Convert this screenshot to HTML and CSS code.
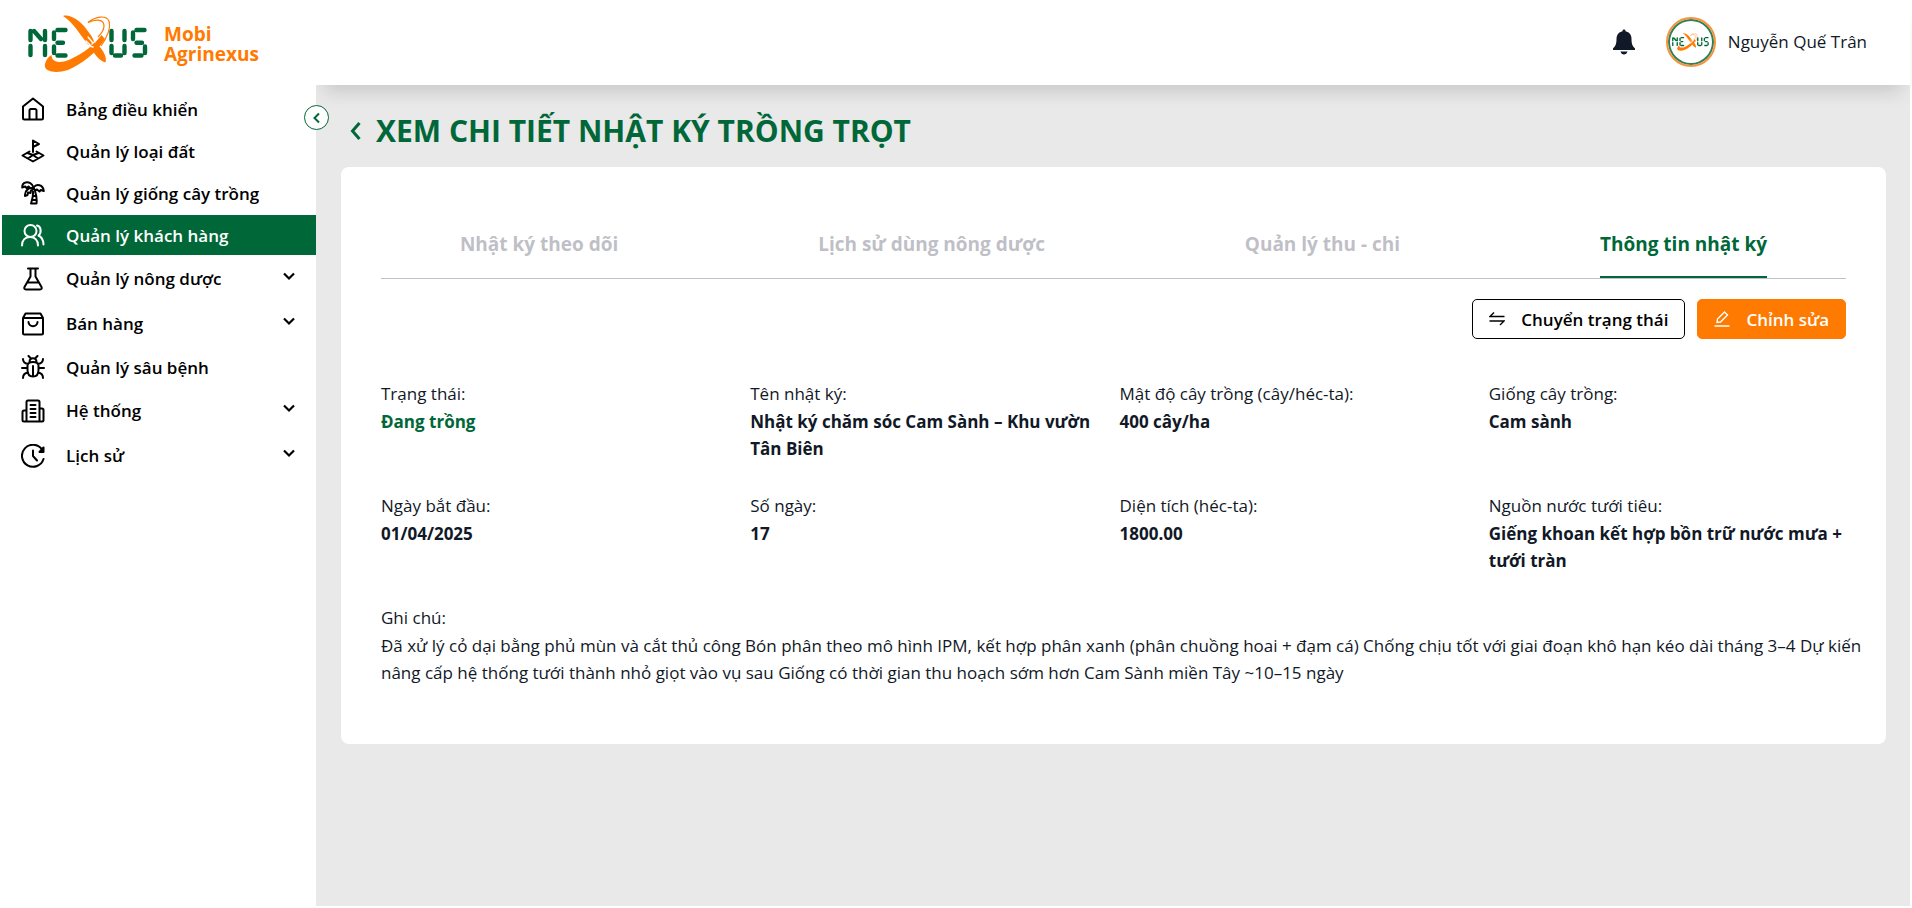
FILE: index.html
```html
<!DOCTYPE html>
<html lang="vi">
<head>
  <meta charset="UTF-8" />
  <meta name="viewport" content="width=device-width, initial-scale=1.0"/>
  <title>Mobi Agrinexus - Chi tiết nhật ký trồng trọt</title>
  <link rel="stylesheet" href="styles.css">
</head>
<body>

  <!-- shared drawings -->
  <svg class="defs" width="0" height="0" aria-hidden="true">
    <symbol id="nexus" viewBox="0 0 120 58">
      <g fill="none" stroke="#006838" stroke-width="4.400" stroke-linecap="round">
        <path d="M2.500 16v9M2.500 31v9M17 16v9M17 31v9M6 16l7 8"/>
        <path d="M26 17.500v6.500M26 31.500v6.500M29.500 15h8M29.500 27.700h5.500M29.500 40.500h8"/>
        <path d="M83.500 16v9M83.500 31v7M96.500 16v9M96.500 31v7M87 40.500h6"/>
        <path d="M105 17.500v6.500M117 31.500v6.500M108.500 15h8M108.500 27.700h5.500M106.500 40.500h7"/>
      </g>
      <path fill="#ff7a00" d="M35 1C42-1 50 5 56 11L71 31C76 37 79 42 77.500 47.500C72 46 68 41 64 35L52 19C46 10 41 5 35 1Z"/>
      <path fill="#ff7a00" d="M23.500 40C24 49 34 48 43 44C56 38 67 29 73.500 20L77 24C68 38 54 49 40 55C28 59 15 57 17 49C18 45 20 42 23.500 40Z"/>
      <path fill="none" stroke="#ff7a00" stroke-width="1.200" d="M60 7.500C68 1 78 0 81 6C83 13 79 23 73 31"/>
      <path fill="none" stroke="#ff7a00" stroke-width="1.200" d="M60 7.500C70 3 76 5 76 11C76 16 72 20 70 22"/>
      <path fill="none" stroke="#fff" stroke-width="1.400" stroke-linecap="round" d="M58 26l5 5M60 22l5 6M64 20l3 7M58 30l7 2M64 29l5-5"/>
    </symbol>
    <symbol id="down" viewBox="0 0 14 14">
      <path d="M2 4.500l5 5 5-5" fill="none" stroke="currentColor" stroke-width="2.200"/>
    </symbol>
  </svg>

  <div class="layout">
    <aside class="sidebar">
      <a href="#" class="brand">
        <svg class="brand-logo"><use href="#nexus"/></svg>
        <span class="brand-name">Mobi<br>Agrinexus</span>
      </a>

      <nav class="menu">
        <a href="#" class="menu-item">
          <svg class="icon" viewBox="0 0 24 24"><path d="M2 9.500L12 1.500l10 8V21a1.500 1.500 0 0 1-1.500 1.500h-17A1.500 1.500 0 0 1 2 21zM8.500 22.500V13.500a1.500 1.500 0 0 1 1.500-1.500h4a1.500 1.500 0 0 1 1.500 1.500v9"/></svg>
          <span>Bảng điều khiển</span>
        </a>
        <a href="#" class="menu-item">
          <svg class="icon" viewBox="0 0 24 24"><path d="M12 13V1.500l6 3.500-6 3M8.500 12.500L1.500 16.500 12 22.500 22.500 16.500 15.500 12.500M6.500 14l5.500 2 5.500-2M7 19.500l5-3.500 5 3.500"/></svg>
          <span>Quản lý loại đất</span>
        </a>
        <a href="#" class="menu-item">
          <svg class="icon" viewBox="0 0 24 24"><path d="M12.500 6.500C11 2 7 .5 4.500 1.500 2.500 2 1.200 4 1.200 6.500l3-1 1.300 1.500 2-1.500 1.500 1.500M12.500 6.500c3-4 9.500-3 10.300 3.500l-3-1-1.300 1.500-2.500-2-2 1zM12.500 7.500C8 6 3.500 9.500 4 15l2.500-1 .5-2.500 2.500.5.500-2.500zM12 10.500C12.500 15 11 19 10 22.500h5.500c.5-4 0-8-1.500-12.500M13 15h2M12.500 19h2.500"/></svg>
          <span>Quản lý giống cây trồng</span>
        </a>
        <a href="#" class="menu-item active">
          <svg class="icon" viewBox="0 0 24 24"><path d="M1 22.500c0-5.500 3.500-8.500 8-8.500s8 3 8 8.500"/><circle cx="9.500" cy="8" r="6"/><path d="M16 2.500c4 .5 5 7 1.500 10 3 1.500 5 4.500 5 9"/></svg>
          <span>Quản lý khách hàng</span>
        </a>
        <button type="button" class="menu-item has-sub">
          <svg class="icon" viewBox="0 0 24 24"><path d="M7 1.500h10M9.500 1.500v8L3.500 20c-.7 1.500 0 2.500 1.500 2.500h14c1.500 0 2.200-1 1.500-2.500L14.500 9.500v-8M6.500 15.500h11"/></svg>
          <span>Quản lý nông dược</span>
          <svg class="arrow"><use href="#down"/></svg>
        </button>
        <button type="button" class="menu-item has-sub">
          <svg class="icon" viewBox="0 0 24 24"><path d="M2 6l2.500-4.500h15L22 6v15a1.500 1.500 0 0 1-1.500 1.500h-17A1.500 1.500 0 0 1 2 21zM2 6h20M7.500 10c0 5.500 9 5.500 9 0"/></svg>
          <span>Bán hàng</span>
          <svg class="arrow"><use href="#down"/></svg>
        </button>
        <a href="#" class="menu-item">
          <svg class="icon" viewBox="0 0 24 24"><path d="M6.500 10.500C6.500 8 8 7 12 7s5.500 1 5.500 3.500V15c0 4-2 6.500-5.500 6.500S6.500 19 6.500 15zM12 11v10M8.500 7c0-5 7-5 7 0M7.500 1l2 2M16.500 1l-2 2M1 13h5M18 13h5M2 4c0 3 1.500 4.500 5 5M22 4c0 3-1.500 4.500-5 5M2 23c0-3.500 1.500-5 5-5.500M22 23c0-3.500-1.500-5-5-5.500"/></svg>
          <span>Quản lý sâu bệnh</span>
        </a>
        <button type="button" class="menu-item has-sub">
          <svg class="icon" viewBox="0 0 24 24"><path d="M5.500 22.500V3A1.500 1.500 0 0 1 7 1.500h10A1.500 1.500 0 0 1 18.500 3v19.500M5.500 11.500H3A1.500 1.500 0 0 0 1.500 13v8A1.500 1.500 0 0 0 3 22.500h18a1.500 1.500 0 0 0 1.500-1.500v-10A1.500 1.500 0 0 0 21 9.500h-2.500M9.500 6h5M9.500 10h5M9.500 14h5M9.500 18h5"/></svg>
          <span>Hệ thống</span>
          <svg class="arrow"><use href="#down"/></svg>
        </button>
        <button type="button" class="menu-item has-sub">
          <svg class="icon" viewBox="0 0 24 24"><path d="M21 5.500A11 11 0 1 0 22.500 15M12 6.500V12l4 4.500"/><path fill="currentColor" d="M22.500 3.500V8H18.500z"/></svg>
          <span>Lịch sử</span>
          <svg class="arrow"><use href="#down"/></svg>
        </button>
      </nav>

      <button type="button" class="collapse" aria-label="Thu gọn">
        <svg width="12" height="12" viewBox="0 0 12 12"><path d="M8 1.500L3.500 6 8 10.500"/></svg>
      </button>
    </aside>

    <div class="main">
      <header class="topbar">
        <button type="button" class="bell" aria-label="Thông báo">
          <svg width="24" height="26" viewBox="0 0 24 26"><path fill="currentColor" d="M12 .5c1 0 1.500.7 1.500 1.700C17.500 3 19.500 6 19.500 10c0 5 1 7 3.500 9.500v1.500H1v-1.500C3.500 17 4.500 15 4.500 10c0-4 2-7 6-7.800 0-1 .5-1.700 1.500-1.700zM8.500 22.500h7c-.5 1.800-1.800 3-3.500 3s-3-1.200-3.500-3z"/></svg>
        </button>
        <a href="#" class="user">
          <span class="avatar"><svg width="37" height="18"><use href="#nexus"/></svg></span>
          <span>Nguyễn Quế Trân</span>
        </a>
      </header>

      <main class="content">
        <div class="page-title">
          <a href="#" class="back" aria-label="Quay lại">
            <svg width="12" height="20" viewBox="0 0 12 20"><path d="M9.500 2L2.500 10l7 8"/></svg>
          </a>
          <h1>XEM CHI TIẾT NHẬT KÝ TRỒNG TRỌT</h1>
        </div>

        <section class="card">
          <div class="tabs" role="tablist">
            <button type="button" class="tab" role="tab">Nhật ký theo dõi</button>
            <button type="button" class="tab" role="tab">Lịch sử dùng nông dược</button>
            <button type="button" class="tab" role="tab">Quản lý thu - chi</button>
            <button type="button" class="tab selected" role="tab" aria-selected="true">Thông tin nhật ký</button>
          </div>

          <div class="actions">
            <button type="button" class="btn btn-outline">
              <svg width="16" height="16" viewBox="0 0 16 16"><path d="M15.500 5.500H1l4-4M.500 10H15l-4 4"/></svg>
              Chuyển trạng thái
            </button>
            <button type="button" class="btn btn-primary">
              <svg width="16" height="16" viewBox="0 0 16 16"><path d="M.500 15h15M3 11.500l.500-3.500L10.500 1 13.500 4 6.500 11z"/></svg>
              Chỉnh sửa
            </button>
          </div>

          <dl class="info">
            <div>
              <dt>Trạng thái:</dt>
              <dd class="status">Đang trồng</dd>
            </div>
            <div>
              <dt>Tên nhật ký:</dt>
              <dd>Nhật ký chăm sóc Cam Sành – Khu vườn Tân Biên</dd>
            </div>
            <div>
              <dt>Mật độ cây trồng (cây/héc-ta):</dt>
              <dd>400 cây/ha</dd>
            </div>
            <div>
              <dt>Giống cây trồng:</dt>
              <dd>Cam sành</dd>
            </div>
            <div>
              <dt>Ngày bắt đầu:</dt>
              <dd>01/04/2025</dd>
            </div>
            <div>
              <dt>Số ngày:</dt>
              <dd>17</dd>
            </div>
            <div>
              <dt>Diện tích (héc-ta):</dt>
              <dd>1800.00</dd>
            </div>
            <div>
              <dt>Nguồn nước tưới tiêu:</dt>
              <dd>Giếng khoan kết hợp bồn trữ nước mưa + tưới tràn</dd>
            </div>
            <div class="note">
              <dt>Ghi chú:</dt>
              <dd>Đã xử lý cỏ dại bằng phủ mùn và cắt thủ công Bón phân theo mô hình IPM, kết hợp phân xanh (phân chuồng hoai + đạm cá) Chống chịu tốt với giai đoạn khô hạn kéo dài tháng 3–4 Dự kiến nâng cấp hệ thống tưới thành nhỏ giọt vào vụ sau Giống có thời gian thu hoạch sớm hơn Cam Sành miền Tây ~10–15 ngày</dd>
            </div>
          </dl>
        </section>
      </main>
    </div>
  </div>

</body>
</html>
```
FILE: styles.css
```css
* {
  box-sizing: border-box;
}

body {
  margin: 0;
  padding: 2px;
  background: #fff;
  color: #111827;
  font-family: 'Segoe UI', 'Open Sans', 'Noto Sans', sans-serif;
  font-size: 17px;
  line-height: 27px;
}

a {
  color: inherit;
  text-decoration: none;
}

button {
  font: inherit;
  color: inherit;
  background: none;
  border: none;
  padding: 0;
  cursor: pointer;
}

svg {
  flex-shrink: 0;
}

.defs {
  position: absolute;
}

.layout {
  display: flex;
  min-height: calc(100vh - 4px);
}

/* sidebar */
.sidebar {
  position: relative;
  flex: 0 0 314px;
  z-index: 2;
  background: #fff;
}

.brand {
  display: flex;
  align-items: center;
  gap: 16px;
  height: 83px;
  padding-left: 26px;
}

.brand-logo {
  width: 120px;
  height: 58px;
}

.brand-name {
  color: #ff7a00;
  font-size: 19px;
  font-weight: 700;
  line-height: 20px;
}

.menu {
  display: flex;
  flex-direction: column;
  gap: 2px;
  padding-top: 4px;
}

.menu-item {
  display: flex;
  align-items: center;
  gap: 21px;
  height: 40px;
  padding: 0 20px 0 19px;
  color: #000;
  font-weight: 600;
  text-align: left;
}

.menu-item.has-sub {
  height: 43px;
}

.menu-item.active {
  background: #006838;
  color: #fff;
}

.icon {
  width: 24px;
  height: 24px;
  fill: none;
  stroke: currentColor;
  stroke-width: 2;
  stroke-linejoin: round;
  stroke-linecap: round;
}

.arrow {
  width: 14px;
  height: 14px;
  margin: 0 0 5px auto;
}

.collapse {
  position: absolute;
  top: 103px;
  right: -13px;
  display: flex;
  align-items: center;
  justify-content: center;
  width: 25px;
  height: 25px;
  border: 1px solid #006838;
  border-radius: 50%;
  background: #fff;
}

.collapse path,
.back path {
  fill: none;
  stroke: #006838;
  stroke-width: 2;
}

/* main column */
.main {
  flex: 1;
  min-width: 0;
  background: #e9e9e9;
}

.topbar {
  display: flex;
  align-items: center;
  justify-content: flex-end;
  gap: 30px;
  height: 83px;
  padding: 0 43px 4px 0;
  background: #fff;
  box-shadow: 0 14px 18px -8px rgba(0, 0, 0, 0.15);
}

.bell {
  display: flex;
}

.user {
  display: flex;
  align-items: center;
  gap: 12px;
}

.avatar {
  display: flex;
  align-items: center;
  justify-content: center;
  width: 50px;
  height: 50px;
  border: 2px solid #f7933c;
  border-radius: 50%;
  box-shadow: inset 0 0 0 2px #2f8058;
}

.content {
  padding: 24px 24px 24px 25px;
}

.page-title {
  display: flex;
  align-items: center;
  gap: 14px;
  height: 44px;
  padding-left: 9px;
}

.back {
  display: flex;
}

.back path {
  stroke-width: 3;
}

.page-title h1 {
  margin: 0;
  color: #006838;
  font-size: 30px;
  font-weight: 700;
  line-height: 44px;
}

.card {
  margin-top: 14px;
  padding: 40px 40px 58px;
  border-radius: 8px;
  background: #fff;
}

.tabs {
  display: flex;
  justify-content: space-around;
  gap: 42px;
  border-bottom: 1px solid #c0c0ca;
}

.tab {
  height: 71px;
  padding-top: 6px;
  border-bottom: 2px solid transparent;
  color: #bfbfc7;
  font-size: 19px;
  font-weight: 700;
}

.tab.selected {
  border-color: #006838;
  color: #006838;
}

.actions {
  display: flex;
  justify-content: flex-end;
  gap: 12px;
  margin-top: 20px;
}

.btn {
  display: flex;
  align-items: center;
  gap: 16px;
  height: 40px;
  padding: 0 16px;
  border: 1px solid #000;
  border-radius: 5px;
  color: #000;
  font-weight: 600;
}

.btn path {
  fill: none;
  stroke: currentColor;
  stroke-width: 1.4;
}

.btn-primary {
  border-color: #ff7a00;
  background: #ff7a00;
  color: #fff;
}

.info {
  display: grid;
  grid-template-columns: repeat(4, 1fr);
  gap: 30px 12px;
  margin: 41px 0 0;
}

.info dt {
  line-height: 28px;
}

.info dd {
  margin: 0;
  font-weight: 700;
}

.info .status {
  color: #006838;
}

.info .note {
  grid-column: 1 / -1;
  margin-right: -28px;
}

.info .note dd {
  font-weight: 400;
}
```
